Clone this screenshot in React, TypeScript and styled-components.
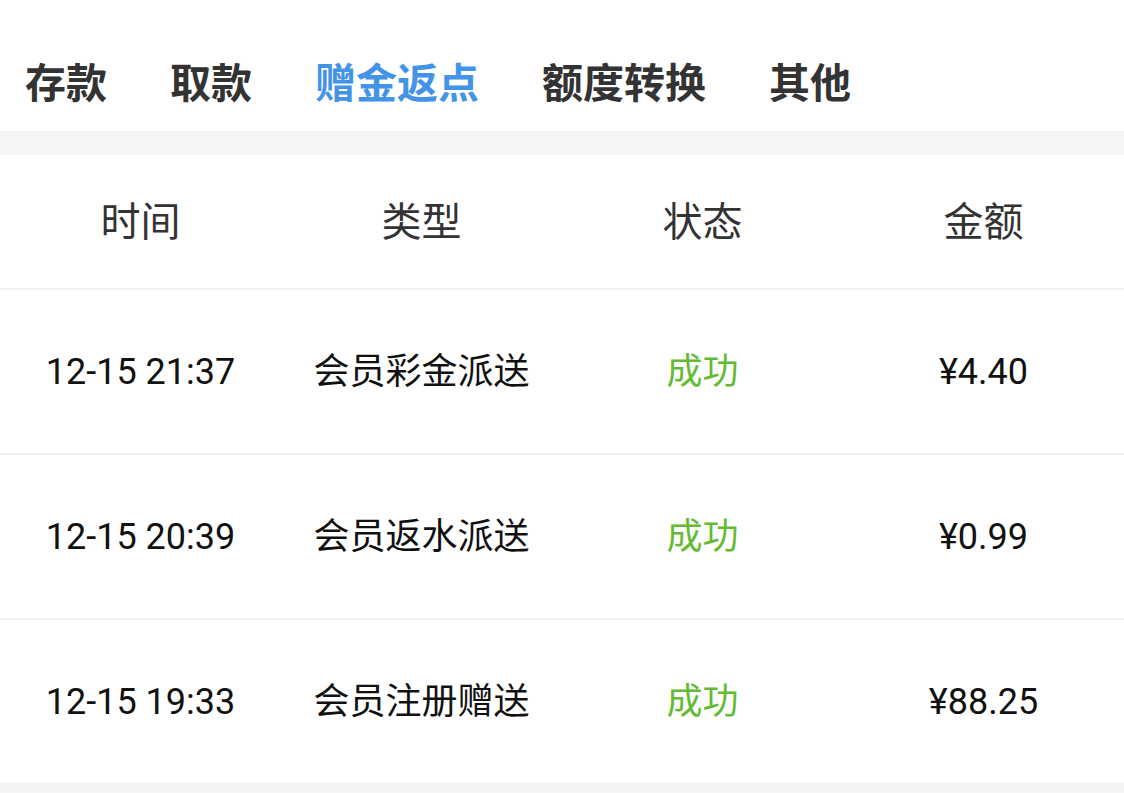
import * as React from "react"
import styled, { createGlobalStyle } from "styled-components"

const GlobalStyle = createGlobalStyle`
    html, body {
        margin: 0;
        padding: 0;
        background: #ffffff;
    }
    body {
        font-family: Roboto, "Noto Sans CJK SC", sans-serif;
        color: #222;
    }
`

const Page = styled.div`
    width: 1124px;
    height: 793px;
    overflow: hidden;
    background: #f4f5f7;
`

const Tabs = styled.div`
    display: flex;
    align-items: center;
    gap: 63px;
    height: 131px;
    padding: 36px 0 0 25px;
    box-sizing: border-box;
    background: #ffffff;
`

const Tab = styled.div<{ active?: boolean }>`
    font-size: 41px;
    font-weight: 700;
    line-height: 48px;
    color: ${({ active }) => (active ? "#4393e6" : "#333333")};
`

const Strip = styled.div`
    height: 24px;
    background: #f4f5f7;
`

const Table = styled.div`
    background: #ffffff;
`

const Row = styled.div<{ head?: boolean }>`
    display: grid;
    grid-template-columns: repeat(4, 1fr);
    align-items: center;
    height: ${({ head }) => (head ? "135px" : "165px")};
    border-bottom: 2px solid #f1f1f2;
    box-sizing: border-box;
`

const HeadCell = styled.div`
    text-align: center;
    font-size: 40px;
    color: #333333;
    line-height: 48px;
    padding-top: 2px;
`

const Cell = styled.div<{ green?: boolean }>`
    text-align: center;
    font-size: 36px;
    line-height: 44px;
    color: ${({ green }) => (green ? "#62bb33" : "#111111")};
`

const tabs = ["存款", "取款", "赠金返点", "额度转换", "其他"]

const rows = [
    { time: "12-15 21:37", type: "会员彩金派送", state: "成功", amount: "¥4.40" },
    { time: "12-15 20:39", type: "会员返水派送", state: "成功", amount: "¥0.99" },
    { time: "12-15 19:33", type: "会员注册赠送", state: "成功", amount: "¥88.25" },
]

export default function App() {
    return (
        <Page>
            <GlobalStyle />
            <Tabs>
                {tabs.map((t, i) => (
                    <Tab key={t} active={i === 2}>{t}</Tab>
                ))}
            </Tabs>
            <Strip />
            <Table>
                <Row head>
                    <HeadCell>时间</HeadCell>
                    <HeadCell>类型</HeadCell>
                    <HeadCell>状态</HeadCell>
                    <HeadCell>金额</HeadCell>
                </Row>
                {rows.map(r => (
                    <Row key={r.time}>
                        <Cell>{r.time}</Cell>
                        <Cell>{r.type}</Cell>
                        <Cell green>{r.state}</Cell>
                        <Cell>{r.amount}</Cell>
                    </Row>
                ))}
            </Table>
        </Page>
    )
}
